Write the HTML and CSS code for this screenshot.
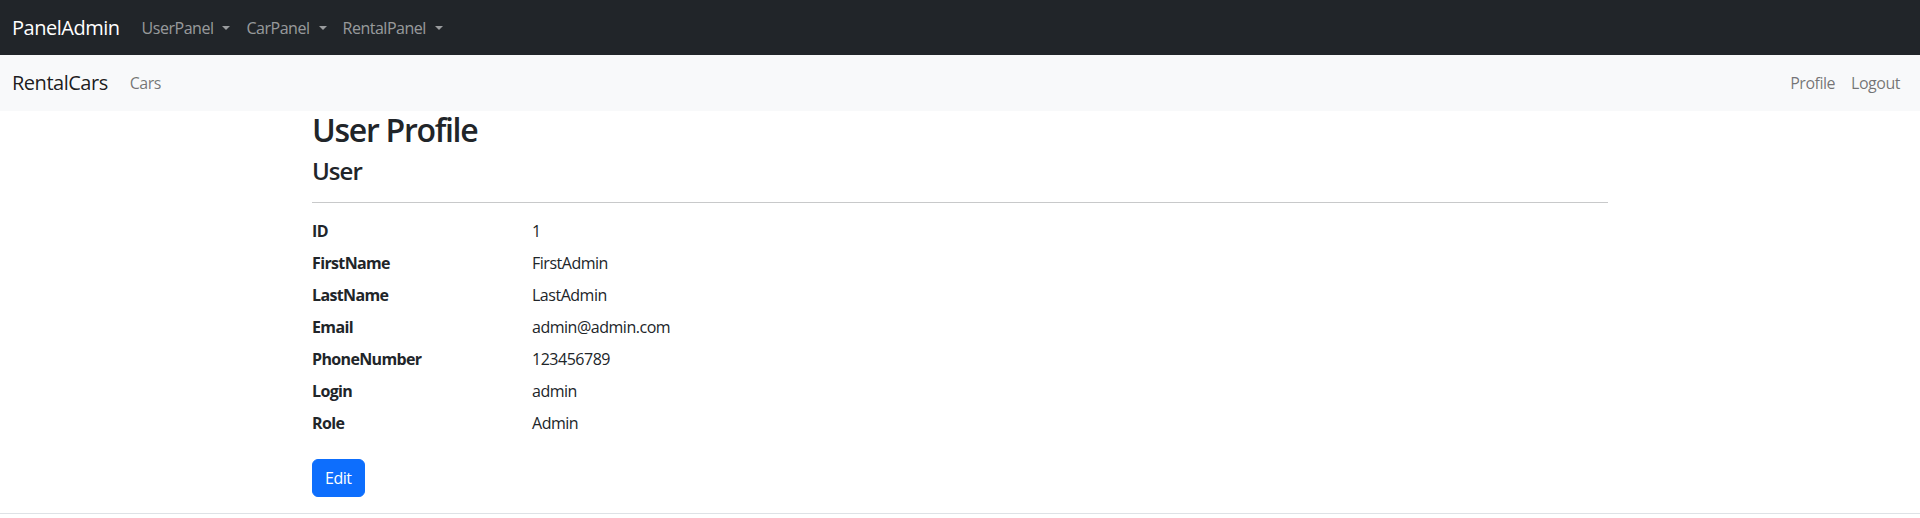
FILE: index.html
```html
<!DOCTYPE html>
<html lang="en">
<head>
<meta charset="utf-8">
<title>User Profile - RentalCars</title>
<link rel="stylesheet" href="styles.css">
</head>
<body>
<nav class="navbar navbar-dark">
  <div class="nav-inner">
    <a class="brand" href="#">PanelAdmin</a>
    <ul class="nav-list">
      <li><a class="nav-link dropdown-toggle" href="#">UserPanel</a></li>
      <li><a class="nav-link dropdown-toggle" href="#">CarPanel</a></li>
      <li><a class="nav-link dropdown-toggle" href="#">RentalPanel</a></li>
    </ul>
  </div>
</nav>
<nav class="navbar navbar-light">
  <div class="nav-inner">
    <a class="brand" href="#">RentalCars</a>
    <ul class="nav-list">
      <li><a class="nav-link" href="#">Cars</a></li>
    </ul>
    <ul class="nav-list nav-right">
      <li><a class="nav-link" href="#">Profile</a></li>
      <li><a class="nav-link" href="#">Logout</a></li>
    </ul>
  </div>
</nav>
<div class="container">
  <main class="main">
    <h2 class="title">User Profile</h2>
    <h4 class="subtitle">User</h4>
    <hr class="divider">
    <dl class="details">
      <dt>ID</dt><dd>1</dd>
      <dt>FirstName</dt><dd>FirstAdmin</dd>
      <dt>LastName</dt><dd>LastAdmin</dd>
      <dt>Email</dt><dd>admin@admin.com</dd>
      <dt>PhoneNumber</dt><dd>123456789</dd>
      <dt>Login</dt><dd>admin</dd>
      <dt>Role</dt><dd>Admin</dd>
    </dl>
    <a class="btn-primary" href="#">Edit</a>
  </main>
</div>
<footer class="footer"></footer>
</body>
</html>
```
FILE: styles.css
```css
* { box-sizing: border-box; }
html, body { margin: 0; padding: 0; }
body {
  font-family: "Open Sans", "Noto Sans", sans-serif;
  font-size: 16px;
  line-height: 1.5;
  letter-spacing: -0.03em;
  color: #212529;
  background: #fff;
  overflow: hidden;
}
a { text-decoration: none; }
ul { list-style: none; margin: 0; padding: 0; }

.navbar { padding: 8px 0; }
.navbar-dark { background: #212529; height: 55px; }
.navbar-light { background: #f8f9fa; height: 56px; }
.nav-inner {
  display: flex;
  align-items: center;
  padding: 0 12px;
}
.brand {
  font-size: 20px;
  line-height: 30px;
  padding: 5px 0;
  margin-right: 14px;
  white-space: nowrap;
}
.navbar-dark .brand { color: #fff; }
.navbar-light .brand { color: rgba(0,0,0,.9); }
.nav-list { display: flex; }
.nav-right { margin-left: auto; }
.nav-link {
  display: block;
  padding: 8px;
  line-height: 24px;
  font-size: 16px;
}
.navbar-dark .nav-link { color: rgba(255,255,255,.55); }
.navbar-light .nav-link { color: rgba(0,0,0,.55); }
.dropdown-toggle::after {
  content: "";
  display: inline-block;
  margin-left: 9px;
  vertical-align: 0.255em;
  border-top: 0.3em solid;
  border-right: 0.3em solid transparent;
  border-left: 0.3em solid transparent;
}

.container {
  width: 100%;
  max-width: 1320px;
  margin: 0 auto;
  padding: 0 12px;
}
.main { padding-bottom: 16px; }
.title {
  font-size: 32px;
  font-weight: 600;
  letter-spacing: -0.04em;
  line-height: 1.2;
  margin: 0 0 8px;
}
.subtitle {
  font-size: 24px;
  font-weight: 600;
  letter-spacing: -0.04em;
  line-height: 1.2;
  margin: 0;
}
.divider {
  margin: 16px 0;
  border: 0;
  border-top: 1px solid #c8c9ca;
}
.details {
  display: grid;
  grid-template-columns: 220px 1fr;
  margin: 0 0 16px -12px;
}
.details dt {
  font-weight: 700;
  letter-spacing: -0.04em;
  padding: 0 12px;
  margin: 0;
}
.details dd {
  padding: 0 12px;
  margin: 0 0 8px;
}
.btn-primary {
  display: inline-block;
  background: #0d6efd;
  color: #fff;
  border: 1px solid #0d6efd;
  border-radius: 6px;
  padding: 6px 12px;
  font-size: 16px;
  line-height: 24px;
}
.footer {
  border-top: 1px solid #dee2e6;
  height: 60px;
}
```
